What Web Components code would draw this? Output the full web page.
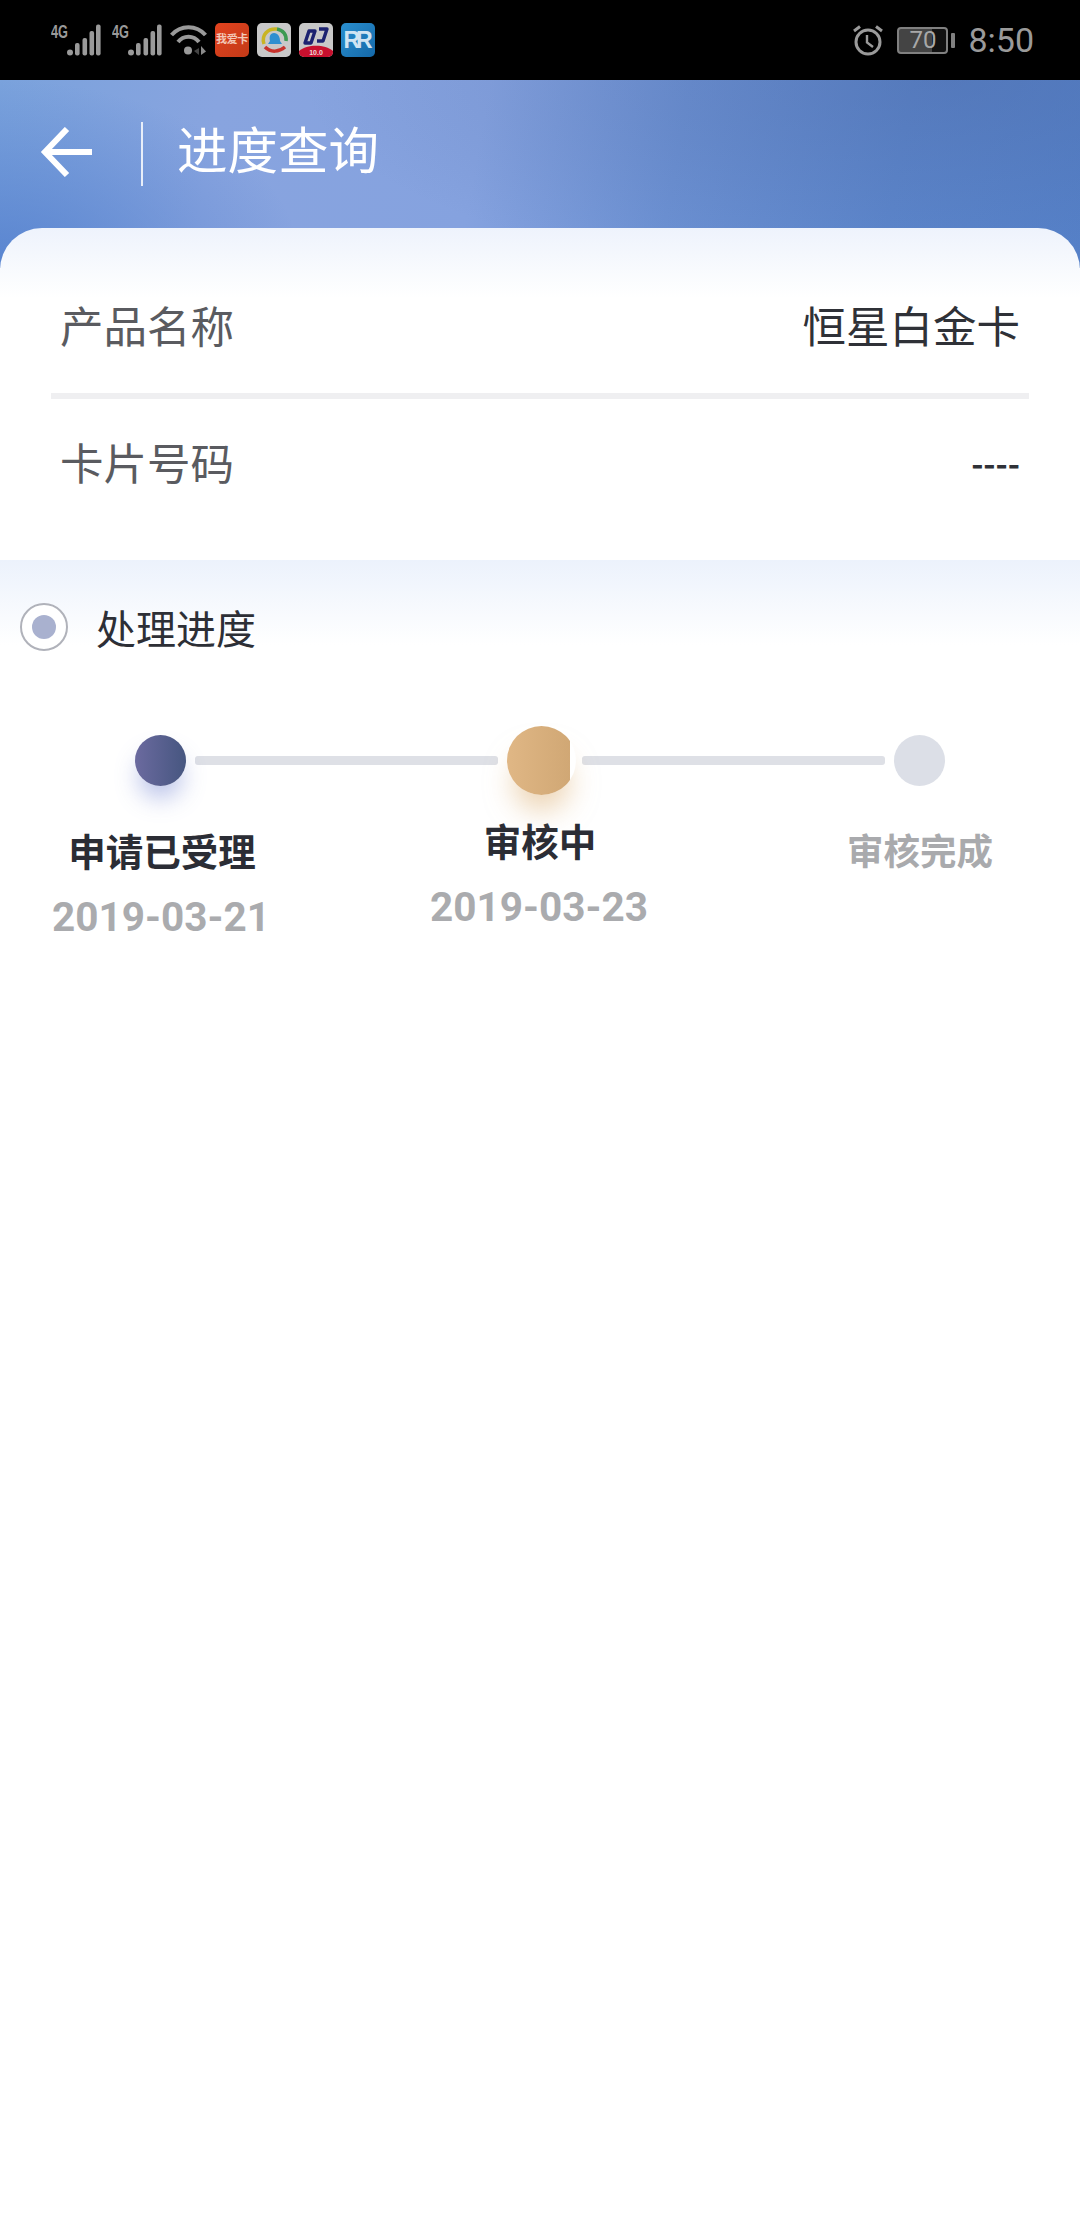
<!DOCTYPE html>
<html lang="zh">
<head>
<meta charset="utf-8">
<title>进度查询</title>
<style>
    html, body {
        margin: 0;
        background: #fff;
        font-family: "Noto Sans CJK SC", "Noto Sans", sans-serif;
    }
    progress-page {
        width: 1080px;
        height: 2240px;
    }
</style>
</head>
<body>
<template id="signal-icon-template">
    <style>
        :host {
            display: block;
            width: 50px;
            height: 46px;
            margin-right: 11px;
        }
        svg {
            display: block;
        }
    </style>
    <svg width="50" height="46" viewBox="0 -6 50 46" fill="#9a9a9a">
        <text x="0" y="15" font-family="Liberation Sans, sans-serif" font-size="19" font-weight="bold" textLength="17" lengthAdjust="spacingAndGlyphs">4G</text>
        <circle cx="19" cy="29.5" r="3"/>
        <rect x="24" y="20" width="4.6" height="12.5" rx="2"/>
        <rect x="31.5" y="15" width="4.6" height="17.5" rx="2"/>
        <rect x="38.5" y="8" width="4.6" height="24.5" rx="2"/>
        <rect x="45" y="1.5" width="4.6" height="31" rx="2"/>
    </svg>
</template>

<template id="status-bar-template">
    <style>
        :host {
            display: flex;
            align-items: center;
            height: 80px;
            padding: 0 46px 0 51px;
            box-sizing: border-box;
            background: #000;
            color: #9a9a9a;
            font-family: Roboto, sans-serif;
        }
        .group {
            display: flex;
            align-items: center;
        }
        .spacer {
            flex: 1;
        }
        .wifi {
            margin: 0 8px 0 -3px;
            width: 37px;
            height: 32px;
            display: block;
        }
        .app {
            width: 34px;
            height: 34px;
            margin-right: 8px;
            border-radius: 5px;
            display: flex;
            align-items: center;
            justify-content: center;
            overflow: hidden;
        }
        .app svg {
            display: block;
        }
        .ka {
            background: linear-gradient(135deg, #e2431f, #c23a18);
            color: #f3c9b8;
            font: bold 11px "Noto Sans CJK SC", sans-serif;
            padding-bottom: 5px;
            box-sizing: border-box;
            letter-spacing: -0.4px;
            white-space: nowrap;
        }
        .grey {
            background: #c8c8c8;
        }
        .rr {
            background: linear-gradient(135deg, #2a8fcf, #1468a8);
            color: #cfe4f2;
            font: bold 23px "Liberation Sans", sans-serif;
            letter-spacing: -4px;
            padding-right: 4px;
            box-sizing: border-box;
        }
        .alarm {
            width: 30px;
            height: 32px;
            margin-right: 14px;
            display: block;
        }
        .battery {
            width: 51px;
            height: 27px;
            border: 2px solid #808080;
            border-radius: 4px;
            box-sizing: border-box;
            display: flex;
            align-items: center;
            justify-content: center;
            font-size: 24px;
            color: #a8a8a8;
            background: linear-gradient(to right, #444 0, #444 70%, #111 70%);
        }
        .nub {
            width: 4px;
            height: 15px;
            margin: 0 13px 0 3px;
            border-radius: 1px;
            background: #808080;
        }
        .time {
            font-size: 34px;
            line-height: 40px;
        }
    </style>
    <div class="group">
        <signal-icon></signal-icon>
        <signal-icon></signal-icon>
        <svg class="wifi" viewBox="0 0 37 32">
            <path d="M1.5 11C10.5 0.5 26.5 0.5 35.5 11" fill="none" stroke="#9a9a9a" stroke-width="4"/>
            <path d="M8 18C13.5 11 23.5 11 29 18" fill="none" stroke="#9a9a9a" stroke-width="4"/>
            <circle cx="18" cy="26.5" r="4" fill="#9a9a9a"/>
            <path d="M31 22L36 27.5L31 31Z" fill="#8a8a8a"/>
            <path d="M24 27L29 24V31Z" fill="#444"/>
        </svg>
        <div class="app ka">我爱卡</div>
        <div class="app grey">
            <svg width="34" height="34" viewBox="0 0 34 34">
                <path d="M7 21C4 12 11 5 20 6" fill="none" stroke="#c9b422" stroke-width="3.5"/>
                <path d="M20 6C26 7 30 12 29 18" fill="none" stroke="#3d9a52" stroke-width="3.5"/>
                <path d="M8 24C14 30 22 29 28 24" fill="none" stroke="#c8322c" stroke-width="3.5"/>
                <path d="M17 10C21 10 23 14 23 18L25 21H11L13 18C12 14 13 10 17 10Z" fill="#2f8fd0"/>
            </svg>
        </div>
        <div class="app grey">
            <svg width="34" height="34" viewBox="0 0 34 34">
                <path d="M10 8H16L12 20H6ZM20 6H28L24 18H18" fill="none" stroke="#1c2270" stroke-width="3.4" stroke-linejoin="round"/>
                <path d="M0 34V28C8 21 26 21 34 28V34Z" fill="#c8102e"/>
                <text x="17" y="32" text-anchor="middle" font-family="Liberation Sans, sans-serif" font-size="7" font-weight="bold" fill="#f0d8d8">10.0</text>
            </svg>
        </div>
        <div class="app rr">RR</div>
    </div>
    <div class="spacer"></div>
    <div class="group">
        <svg class="alarm" viewBox="0 0 30 32">
            <circle cx="15" cy="18" r="12" fill="none" stroke="#9a9a9a" stroke-width="3"/>
            <path d="M14 11V18.5L20 23" fill="none" stroke="#9a9a9a" stroke-width="2.4"/>
            <path d="M1 7L7 2.5M29 7L23 2.5" fill="none" stroke="#9a9a9a" stroke-width="3"/>
        </svg>
        <div class="battery">70</div>
        <div class="nub"></div>
        <div class="time">8:50</div>
    </div>
</template>

<template id="app-header-template">
    <style>
        :host {
            display: flex;
            align-items: center;
            height: 188px;
            padding: 0 0 40px 40px;
            box-sizing: border-box;
            color: #fff;
            background:
                radial-gradient(ellipse 60% 110% at 88% 0, rgba(72, 100, 160, .38), rgba(72, 100, 160, 0)),
                radial-gradient(ellipse 28% 100% at 0 100%, rgba(80, 125, 205, .8), rgba(80, 125, 205, 0)),
                linear-gradient(100deg, #7aa2dc 0, #88a4df 20%, #85a2df 44%, #6d92d4 62%, #5d87cd 82%, #5682ca 100%);
        }
        svg {
            width: 54px;
            height: 50px;
            margin-bottom: 5px;
            display: block;
        }
        .line {
            width: 2px;
            height: 64px;
            margin: 0 34px 0 47px;
            background: #e8eef9;
        }
        .title {
            font-size: 50.5px;
            line-height: 64px;
            margin-bottom: 14px;
        }
    </style>
    <svg viewBox="0 0 54 50">
        <path d="M52 25H6M27 2L5 25L27 48" fill="none" stroke="#fff" stroke-width="6"/>
    </svg>
    <div class="line"></div>
    <div class="title"><slot></slot></div>
</template>

<template id="info-card-template">
    <style>
        :host {
            display: block;
            position: relative;
            margin-top: -40px;
            height: 332px;
            padding: 0 51px;
            box-sizing: border-box;
            background: linear-gradient(to bottom, #eef3fc 0, #fff 70px);
            border-radius: 42px 42px 0 0;
        }
    </style>
    <slot></slot>
</template>

<template id="info-row-template">
    <style>
        :host {
            display: flex;
            align-items: center;
            justify-content: space-between;
            height: 124px;
            padding: 0 9px;
            font-size: 43.5px;
            color: #5a5b60;
        }
        :host([divider]) {
            height: 171px;
            padding-top: 27px;
            box-sizing: border-box;
            border-bottom: 6px solid #efeff1;
        }
        .value {
            color: #2f3137;
        }
    </style>
    <span><slot></slot></span>
    <span class="value"><slot name="value"></slot></span>
</template>

<template id="section-head-template">
    <style>
        :host {
            display: flex;
            align-items: center;
            height: 134px;
            padding: 0 0 1px 20px;
            box-sizing: border-box;
            background: linear-gradient(to bottom, #ecf2fc 0, #fff 85px);
            color: #2d2f36;
            font-size: 40px;
        }
        .radio {
            width: 48px;
            height: 48px;
            margin-right: 28px;
            border: 2px solid #b0b2ba;
            border-radius: 50%;
            box-sizing: border-box;
            background: #fff;
            display: flex;
            align-items: center;
            justify-content: center;
        }
        .radio i {
            width: 24px;
            height: 24px;
            border-radius: 50%;
            background: #a9b1cf;
        }
    </style>
    <div class="radio"><i></i></div>
    <slot></slot>
</template>

<template id="step-track-template">
    <style>
        :host {
            display: flex;
            align-items: center;
            gap: 9px;
            height: 69px;
            margin-top: 32px;
            padding-left: 135px;
        }
    </style>
    <slot></slot>
</template>

<template id="step-dot-template">
    <style>
        :host {
            display: block;
            position: relative;
            flex: none;
            width: 51px;
            height: 51px;
        }
        .glow, .face {
            position: absolute;
            inset: 0;
            border-radius: 50%;
        }
        .face {
            background: #dcdfe7;
        }
        :host([state="done"]) .glow {
            box-shadow: 0 16px 24px -4px rgba(95, 115, 205, .45);
        }
        :host([state="done"]) .face {
            background: linear-gradient(to right, #6b6a9f, #465680);
        }
        :host([state="active"]) {
            width: 66px;
            height: 69px;
        }
        :host([state="active"]) .glow,
        :host([state="active"]) .face {
            right: auto;
            width: 69px;
        }
        :host([state="active"]) .glow {
            box-shadow: 0 22px 28px -6px rgba(222, 178, 120, .55);
        }
        :host([state="active"]) .face {
            background: linear-gradient(to right, #e0b785, #cfa673);
            clip-path: inset(0 6px 0 0);
        }
    </style>
    <div class="glow"></div>
    <div class="face"></div>
</template>

<template id="step-line-template">
    <style>
        :host {
            display: block;
            flex: none;
            width: 303px;
            height: 9px;
            border-radius: 3px;
            background: #dee0e6;
        }
    </style>
</template>

<template id="step-labels-template">
    <style>
        :host {
            display: flex;
            padding-left: 42px;
            gap: 140px;
        }
    </style>
    <slot></slot>
</template>

<template id="step-label-template">
    <style>
        :host {
            display: block;
            width: 240px;
            margin-top: 30px;
            text-align: center;
        }
        :host([state="active"]) {
            margin-left: -2px;
            margin-top: 20px;
        }
        .name {
            font-size: 37.5px;
            font-weight: 700;
            line-height: 50px;
            color: #2b2d35;
            white-space: nowrap;
        }
        :host([state="todo"]) .name {
            font-size: 36.5px;
            color: #a9aaad;
        }
        .date {
            margin-top: 29px;
            margin-left: -2px;
            font-family: Roboto, sans-serif;
            font-size: 40.5px;
            font-weight: 700;
            line-height: 26px;
            color: #aaabae;
            white-space: nowrap;
        }
    </style>
    <div class="name"><slot></slot></div>
    <div class="date"><slot name="date"></slot></div>
</template>

<template id="progress-page-template">
    <style>
        :host {
            display: block;
            background: #fff;
        }
        .dashes {
            display: inline-block;
            font-size: 33px;
            font-weight: 700;
            padding-bottom: 10px;
        }
    </style>
    <status-bar></status-bar>
    <app-header>进度查询</app-header>
    <info-card>
        <info-row divider>产品名称<span slot="value">恒星白金卡</span></info-row>
        <info-row>卡片号码<span slot="value" class="dashes">----</span></info-row>
    </info-card>
    <section-head>处理进度</section-head>
    <step-track>
        <step-dot state="done"></step-dot>
        <step-line></step-line>
        <step-dot state="active"></step-dot>
        <step-line></step-line>
        <step-dot></step-dot>
    </step-track>
    <step-labels>
        <step-label state="done">申请已受理<span slot="date">2019-03-21</span></step-label>
        <step-label state="active">审核中<span slot="date">2019-03-23</span></step-label>
        <step-label state="todo">审核完成</step-label>
    </step-labels>
</template>

<progress-page></progress-page>

<script>
    // every element here is just a template stamped into an open shadow root
    class TemplatedElement extends HTMLElement {
        constructor() {
            super();
            const t = document.querySelector('#' + this.constructor.templateId);
            this.attachShadow({ mode: 'open' }).appendChild(t.content.cloneNode(true));
        }
    }

    ['signal-icon', 'status-bar', 'app-header', 'info-card', 'info-row', 'section-head', 'step-track',
        'step-dot', 'step-line', 'step-labels', 'step-label', 'progress-page'].forEach(function (name) {
        customElements.define(name, class extends TemplatedElement {
            static get templateId() { return name + '-template'; }
        });
    });
</script>
</body>
</html>
